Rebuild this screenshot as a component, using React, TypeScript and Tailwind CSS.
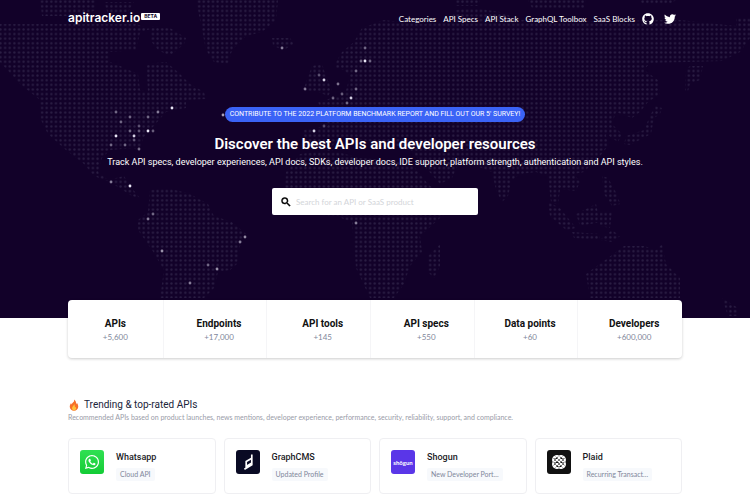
import type { ReactNode } from 'react'
import { FaGithub, FaTwitter, FaWhatsapp } from 'react-icons/fa'
import { MdSearch } from 'react-icons/md'

interface Api {
  name: string
  tag: string
  logo: ReactNode
}

const NAV_LINKS = ['Categories', 'API Specs', 'API Stack', 'GraphQL Toolbox', 'SaaS Blocks']

const STATS = [
  { label: 'APIs', value: '+5,600' },
  { label: 'Endpoints', value: '+17,000' },
  { label: 'API tools', value: '+145' },
  { label: 'API specs', value: '+550' },
  { label: 'Data points', value: '+60' },
  { label: 'Developers', value: '+600,000' },
]

const LAND = [
  // North and Central America
  '0,24 136,24 150,29 140,33 136,50 110,52 110,62 120,66 138,74 140,90 148,92 146,64 166,62 178,72 190,84 204,92 206,99 186,100 186,108 166,112 152,128 143,138 140,152 134,148 110,150 102,158 98,172 108,180 124,176 130,186 140,198 132,196 110,182 94,176 84,164 66,150 48,134 41,120 40,100 20,84 0,62',
  // Arctic islands
  '40,0 96,0 96,10 80,16 42,16',
  '104,2 134,2 128,12 108,14',
  '152,26 170,28 186,38 184,44 170,56 158,50 150,40',
  // Greenland
  '196,0 278,0 276,20 262,32 246,36 232,50 228,64 214,62 206,50 202,30',
  '272,38 290,38 294,44 284,50 273,46',
  // South America
  '150,190 168,188 190,194 208,204 214,216 232,222 246,234 240,246 237,264 230,270 218,272 214,288 204,298 160,298 164,270 152,250 138,230 138,220 148,212',
  // British Isles
  '304,88 312,66 322,64 326,76 332,90 328,96 318,92 306,92',
  // Europe and Asia
  '336,62 342,52 354,42 362,28 384,20 400,22 424,24 450,20 456,10 474,8 500,12 520,20 560,18 600,22 650,20 680,20 736,26 736,18 750,18 750,38 740,52 722,61 650,63 644,70 658,80 660,94 648,102 640,112 632,118 616,112 612,124 622,134 618,142 606,134 608,146 600,156 584,172 574,174 580,182 576,191 560,189 558,205 551,202 548,176 536,172 520,174 512,180 508,196 502,202 496,190 492,172 460,160 452,178 440,184 426,168 410,150 390,144 360,140 340,138 330,148 304,146 304,130 328,126 318,102 332,98 345,94 350,76 344,70 336,68',
  '528,0 586,0 584,8 532,8',
  '455,0 480,0 478,6 456,6',
  '640,0 676,0 670,4 642,4',
  // Kamchatka and Japan
  '690,66 703,66 700,80 690,84 688,91 685,91 686,70',
  '655,106 662,108 660,114 654,118 651,134 630,145 624,144 626,136 644,130 650,116',
  // Africa
  '286,172 300,154 330,150 360,158 410,162 428,184 446,200 450,210 440,218 420,236 422,252 410,266 404,284 394,298 370,298 356,268 352,222 336,216 300,214 284,196',
  '428,256 440,244 440,266 434,278 428,272',
  // South-east Asia and Oceania
  '548,202 560,208 576,228 566,230 550,216',
  '576,214 596,204 600,222 580,226',
  '572,232 600,234 600,240 574,238',
  '602,176 608,178 618,196 620,204 612,206 604,194',
  '600,212 612,212 610,228 600,226',
  '612,230 620,236 612,242 600,240',
  '586,274 608,258 624,246 644,246 656,250 662,244 666,264 680,278 680,298 590,298',
  '722,298 738,308 738,316 728,316',
]

// x, y, opacity of the highlighted cities
const CITIES = [
  [282, 48, 0.5],
  [365, 48, 0.4],
  [365, 61, 1],
  [361, 61, 0.4],
  [370, 61, 0.4],
  [356, 71, 0.4],
  [319, 75, 0.3],
  [324, 80, 0.9],
  [305, 89, 0.5],
  [338, 84, 0.5],
  [356, 89, 0.4],
  [342, 94, 0.4],
  [333, 98, 0.4],
  [351, 98, 0.9],
  [347, 103, 0.4],
  [223, 115, 0.7],
  [314, 131, 0.9],
  [324, 126, 0.3],
  [172, 108, 1],
  [116, 112, 0.4],
  [121, 122, 0.4],
  [130, 117, 0.4],
  [148, 117, 0.4],
  [158, 112, 0.5],
  [139, 126, 0.3],
  [130, 131, 0.4],
  [139, 131, 0.3],
  [148, 131, 1],
  [153, 131, 0.4],
  [116, 136, 1],
  [134, 136, 0.9],
  [134, 140, 0.3],
  [111, 145, 0.4],
  [125, 145, 0.4],
  [139, 149, 0.4],
  [111, 182, 0.5],
  [130, 186, 1],
  [153, 214, 0.4],
  [148, 219, 0.5],
  [245, 237, 0.6],
  [240, 242, 0.5],
  [162, 251, 0.6],
  [208, 265, 0.4],
  [217, 269, 0.6],
  [190, 283, 0.5],
  [356, 223, 0.5],
]

function WorldMap() {
  return (
    <svg
      aria-hidden="true"
      viewBox="0 0 750 318"
      preserveAspectRatio="xMidYMin slice"
      className="absolute inset-0 h-full w-full"
    >
      <defs>
        <pattern id="dots" x="-1.81" y="-0.62" width="4.62" height="4.62" patternUnits="userSpaceOnUse">
          <circle cx="2.31" cy="2.31" r="1.15" fill="#2b1e44" />
        </pattern>
      </defs>
      {LAND.map((points) => (
        <polygon key={points} points={points} fill="url(#dots)" />
      ))}
      {CITIES.map(([x, y, opacity]) => (
        <circle key={`${x}-${y}`} cx={x} cy={y} r="1.4" fill="#e9e6f5" opacity={opacity} />
      ))}
    </svg>
  )
}

function FlameIcon() {
  return (
    <svg aria-hidden="true" viewBox="0 0 24 24" className="h-3 w-3">
      <path
        d="M12 1c1 4-1 5-3 7-1 1-1.500 2-1.500 3C6.500 10 6 9 6.500 7.500 4.500 10 3.500 13 3.500 15.500c0 4.500 3.700 8 8.500 8s8.500-3.500 8.500-8c0-3-1.200-6-3-8 0 1.500-.4 2.500-1.200 3.200C16.500 7 15.500 3 12 1z"
        fill="#f7702a"
      />
      <path
        d="M12.200 10c.4 3-4.200 5-4.200 8.700 0 2.600 1.900 4.100 4.100 4.100s4.200-1.500 4.200-4.100c0-1.400-.6-2.600-1.400-3.300-.2.700-.5 1.100-1 1.400 0-2.800-.5-5.300-1.700-6.800z"
        fill="#ffc13a"
      />
    </svg>
  )
}

function GraphCmsLogo() {
  return (
    <svg aria-hidden="true" viewBox="0 0 24 24" className="h-6 w-6">
      <path
        d="M15.800 4.500v10.300L8.400 19.200M15.800 8.300l-5.600 3.300v4.800l5.600-3.300"
        fill="none"
        stroke="#fff"
        strokeWidth="1.700"
      />
    </svg>
  )
}

function PlaidLogo() {
  return (
    <svg aria-hidden="true" viewBox="0 0 24 24" className="h-6 w-6" fill="none" stroke="#fff">
      <defs>
        <clipPath id="plaid">
          <rect x="5.500" y="5.500" width="13" height="13" rx="4" />
        </clipPath>
      </defs>
      <g clipPath="url(#plaid)" strokeWidth="1.300">
        <path d="M2 6l16 16M2 10l12 12M2 2l20 20M6 2l16 16M10 2l12 12M22 6L6 22M22 10L10 22M22 2L2 22M18 2L2 18M14 2L2 14" />
      </g>
      <path
        d="M8.200 6Q10.200 5.300 12 6.300 13.800 5.300 15.800 6L18 8.200Q18.700 10.200 17.700 12 18.700 13.800 18 15.800L15.800 18Q13.800 18.700 12 17.700 10.200 18.700 8.200 18L6 15.800Q5.300 13.800 6.300 12 5.300 10.200 6 8.200z"
        strokeWidth="1.200"
      />
    </svg>
  )
}

const APIS: Api[] = [
  {
    name: 'Whatsapp',
    tag: 'Cloud API',
    logo: (
      <span className="flex h-6 w-6 items-center justify-center rounded-[3px] bg-linear-to-b from-[#2fe052] to-[#12cc35]">
        <FaWhatsapp className="h-4 w-4 text-white" />
      </span>
    ),
  },
  {
    name: 'GraphCMS',
    tag: 'Updated Profile',
    logo: (
      <span className="block h-6 w-6 rounded-[3px] bg-[#090a24]">
        <GraphCmsLogo />
      </span>
    ),
  },
  {
    name: 'Shogun',
    tag: 'New Developer Port...',
    logo: (
      <span className="flex h-6 w-6 items-center justify-center rounded-[3px] bg-[#5a36e8] font-['Lato',sans-serif] text-[6px] font-bold text-white">
        shōgun
      </span>
    ),
  },
  {
    name: 'Plaid',
    tag: 'Recurring Transact...',
    logo: (
      <span className="block h-6 w-6 rounded-[3px] bg-[#111111]">
        <PlaidLogo />
      </span>
    ),
  },
]

function Header() {
  return (
    <header className="flex items-center justify-between">
      <a href="#" className="flex items-start gap-px text-white">
        <span className="font-['Inter',sans-serif] text-[12px] leading-[16px] font-semibold">apitracker.io</span>
        <span className="mt-[3px] rounded-[1px] bg-white px-[3px] font-['Inter',sans-serif] text-[5px] leading-[7px] font-bold text-[#120129]">
          BETA
        </span>
      </a>
      <nav className="mr-[6px] flex items-center gap-[7px] pt-px text-[8px] leading-[12px] text-white">
        {NAV_LINKS.map((link) => (
          <a key={link} href="#" className="whitespace-nowrap">
            {link}
          </a>
        ))}
        <a href="#" aria-label="GitHub">
          <FaGithub className="h-3 w-3" />
        </a>
        <a href="#" aria-label="Twitter" className="ml-[3px]">
          <FaTwitter className="h-3 w-3" />
        </a>
      </nav>
    </header>
  )
}

function Hero() {
  return (
    <div className="relative bg-[#120129]">
      <WorldMap />
      <div className="relative px-[68px] pt-[10px] pb-[103px]">
        <Header />
        <div className="mt-[81px] flex flex-col items-center text-center text-white">
          <a
            href="#"
            className="rounded-full bg-[#3b63f6] px-[5px] font-['Roboto',sans-serif] text-[7px] leading-[15px] whitespace-nowrap"
          >
            CONTRIBUTE TO THE 2022 PLATFORM BENCHMARK REPORT AND FILL OUT OUR 5&apos; SURVEY!
          </a>
          <h1 className="mt-[12px] font-['Roboto',sans-serif] text-[15px] leading-[20px] font-semibold">
            Discover the best APIs and developer resources
          </h1>
          <p className="mt-[2px] font-['Roboto',sans-serif] text-[9px] leading-[12px]">
            Track API specs, developer experiences, API docs, SDKs, developer docs, IDE support, platform strength,
            authentication and API styles.
          </p>
          <label className="mt-[20px] flex h-[27px] w-[206px] items-center gap-[4px] rounded-xs bg-white px-2 text-black">
            <MdSearch className="h-3 w-3 shrink-0 [&>path:last-child]:stroke-black [&>path:last-child]:stroke-1" />
            <input
              type="search"
              aria-label="Search for an API or SaaS product"
              placeholder="Search for an API or SaaS product"
              className="min-w-0 flex-1 text-[8px] leading-[12px] outline-none placeholder:text-[#d3d5d9]"
            />
          </label>
        </div>
      </div>
    </div>
  )
}

function Stats() {
  return (
    <dl className="relative mx-[68px] -mt-[18px] grid grid-cols-[96fr_repeat(5,104fr)] rounded-sm bg-white text-center shadow-[0_1px_3px_rgba(0,0,0,0.2)]">
      {STATS.map((stat) => (
        <div
          key={stat.label}
          className="border-r border-[#f5f5f7] pt-[17px] pb-[15px] pl-2 first:pl-0 last:border-r-0"
        >
          <dt className="font-['Roboto',sans-serif] text-[10px] leading-[14px] font-bold text-[#111111]">{stat.label}</dt>
          <dd className="text-[8px] leading-[12px] text-[#7f879b]">{stat.value}</dd>
        </div>
      ))}
    </dl>
  )
}

function Trending() {
  return (
    <section className="px-[68px] pt-[40px] pb-[6px]">
      <h2 className="flex items-center gap-1 font-['Roboto',sans-serif] text-[10px] leading-[14px] text-[#20243a]">
        <FlameIcon />
        Trending &amp; top-rated APIs
      </h2>
      <p className="text-[7px] leading-[11px] text-[#999ba8]">
        Recommended APIs based on product launches, news mentions, developer experience, performance, security,
        reliability, support, and compliance.
      </p>
      <ul className="mt-[15px] grid grid-cols-4 gap-2">
        {APIS.map((api) => (
          <li key={api.name}>
            <a href="#" className="flex h-[56px] gap-[12px] rounded-sm border border-[#efeff2] bg-white px-[11px] pt-[11px]">
              {api.logo}
              <div className="pt-px">
                <h3 className="font-['Roboto',sans-serif] text-[9px] leading-[12px] font-medium text-[#1b1b1f]">
                  {api.name}
                </h3>
                <span className="mt-[5px] block w-fit rounded-xs bg-[#f7f9fc] px-1 text-[7px] leading-[13px] whitespace-nowrap text-[#7f879b]">
                  {api.tag}
                </span>
              </div>
            </a>
          </li>
        ))}
      </ul>
    </section>
  )
}

export default function App() {
  return (
    <main className="min-h-screen bg-white font-['Lato',sans-serif]">
      <Hero />
      <Stats />
      <Trending />
    </main>
  )
}
